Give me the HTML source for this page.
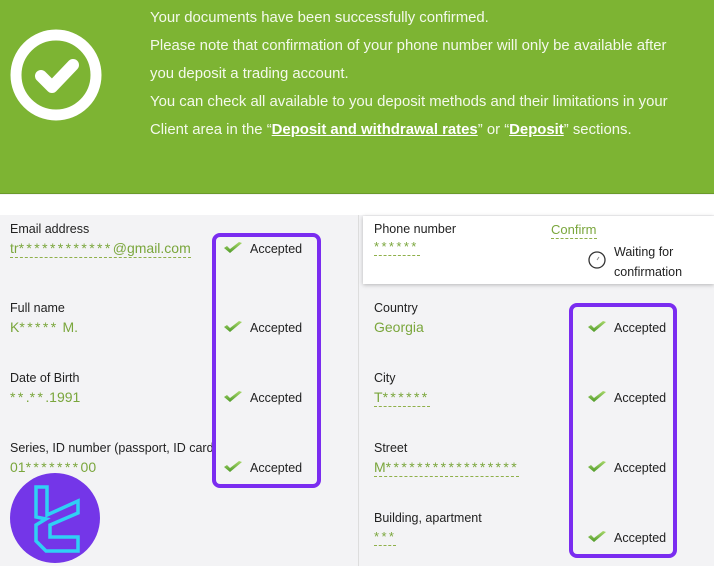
<!DOCTYPE html>
<html><head><style>
*{margin:0;padding:0;box-sizing:border-box}
body{width:714px;height:566px;overflow:hidden;background:#f3f3f5;font-family:"Liberation Sans",sans-serif;position:relative}
.ban{position:absolute;left:0;top:0;width:714px;height:194px;background:#7db433;border-bottom:1px solid #6a9a2a}
.ban p{position:absolute;left:150px;color:#f4f9ec;font-size:14.9px;white-space:nowrap}
.ban b{text-decoration:underline;color:#fff}
.strip{position:absolute;left:0;top:195px;width:714px;height:20px;background:#fff}
.lbl{position:absolute;font-size:12.5px;color:#222;white-space:nowrap}
.val{position:absolute;font-size:14px;color:#7aa63c;white-space:nowrap;border-bottom:1px dashed #8fb04a;line-height:17px}
.val.nb{border-bottom:none}
.s{letter-spacing:2.4px}
.acc{position:absolute;font-size:12.5px;color:#222;white-space:nowrap}
.acc svg{position:absolute;left:-27px;top:-2px}
.pbox{position:absolute;border:4px solid #7a2cf0;border-radius:8px}
</style></head><body>
<div class="ban">
<svg style="position:absolute;left:10px;top:29px" width="92" height="92" viewBox="0 0 92 92"><circle cx="46" cy="46" r="40" fill="none" stroke="#fff" stroke-width="11"/><path d="M31 47 L42 58 L63 36" fill="none" stroke="#fff" stroke-width="12" stroke-linecap="round" stroke-linejoin="round"/></svg>
<p style="top:10px">Your documents have been successfully confirmed.</p>
<p style="top:38px">Please note that confirmation of your phone number will only be available after</p>
<p style="top:66px">you deposit a trading account.</p>
<p style="top:94px">You can check all available to you deposit methods and their limitations in your</p>
<p style="top:122px">Client area in the “<b>Deposit and withdrawal rates</b>” or “<b>Deposit</b>” sections.</p>
</div>
<div class="strip"></div>
<div style="position:absolute;left:358px;top:215px;width:1px;height:351px;background:#ddd"></div>
<div style="position:absolute;left:363px;top:216px;width:351px;height:68px;background:#fff;box-shadow:0 1px 4px rgba(0,0,0,.25)"></div>

<div class="lbl" style="left:10px;top:222px">Email address</div>
<div class="val" style="left:10px;top:240px">tr<span class="s">************</span>@gmail.com</div>
<div class="lbl" style="left:10px;top:301px">Full name</div>
<div class="val nb" style="left:10px;top:319px">K<span class="s">*****</span> M.</div>
<div class="lbl" style="left:10px;top:371px">Date of Birth</div>
<div class="val nb" style="left:10px;top:389px"><span class="s">**</span>.<span class="s">**</span>.1991</div>
<div class="lbl" style="left:10px;top:441px">Series, ID number (passport, ID card</div>
<div class="val nb" style="left:10px;top:459px">01<span class="s">*******</span>00</div>

<div class="lbl" style="left:374px;top:222px">Phone number</div>
<div class="val" style="left:374px;top:238px;font-size:13px;width:46px"><span class="s">******</span></div>
<div class="val" style="left:551px;top:221px;font-size:13px">Confirm</div>
<svg style="position:absolute;left:587px;top:250px" width="20" height="20"><circle cx="10" cy="10" r="8" fill="#fff" stroke="#333" stroke-width="1.3"/><path d="M10 10 L12 7" stroke="#888"/></svg>
<div class="lbl" style="left:614px;top:242px;line-height:20px">Waiting for<br>confirmation</div>
<div class="lbl" style="left:374px;top:301px">Country</div>
<div class="val nb" style="left:374px;top:319px">Georgia</div>
<div class="lbl" style="left:374px;top:371px">City</div>
<div class="val" style="left:374px;top:389px">T<span class="s">******</span></div>
<div class="lbl" style="left:374px;top:441px">Street</div>
<div class="val" style="left:374px;top:459px">M<span class="s">*****************</span></div>
<div class="lbl" style="left:374px;top:511px">Building, apartment</div>
<div class="val" style="left:374px;top:528px;font-size:13px"><span class="s">***</span></div>

<div class="pbox" style="left:212px;top:233px;width:109px;height:255px"></div>
<div class="pbox" style="left:569px;top:303px;width:108px;height:255px"></div>

<svg width="0" height="0" style="position:absolute"><defs><linearGradient id="g" x1="0" y1="0" x2="0" y2="1"><stop offset="0" stop-color="#a8d86a"/><stop offset="1" stop-color="#4f9a2a"/></linearGradient></defs></svg>
<div class="acc" style="left:250px;top:242px"><svg width="20" height="16"><path d="M1 8 L7 13 L19 3 L16 2 L7 9 L4 6Z" fill="url(#g)"/></svg>Accepted</div>
<div class="acc" style="left:250px;top:321px"><svg width="20" height="16"><path d="M1 8 L7 13 L19 3 L16 2 L7 9 L4 6Z" fill="url(#g)"/></svg>Accepted</div>
<div class="acc" style="left:250px;top:391px"><svg width="20" height="16"><path d="M1 8 L7 13 L19 3 L16 2 L7 9 L4 6Z" fill="url(#g)"/></svg>Accepted</div>
<div class="acc" style="left:250px;top:461px"><svg width="20" height="16"><path d="M1 8 L7 13 L19 3 L16 2 L7 9 L4 6Z" fill="url(#g)"/></svg>Accepted</div>
<div class="acc" style="left:614px;top:321px"><svg width="20" height="16"><path d="M1 8 L7 13 L19 3 L16 2 L7 9 L4 6Z" fill="url(#g)"/></svg>Accepted</div>
<div class="acc" style="left:614px;top:391px"><svg width="20" height="16"><path d="M1 8 L7 13 L19 3 L16 2 L7 9 L4 6Z" fill="url(#g)"/></svg>Accepted</div>
<div class="acc" style="left:614px;top:461px"><svg width="20" height="16"><path d="M1 8 L7 13 L19 3 L16 2 L7 9 L4 6Z" fill="url(#g)"/></svg>Accepted</div>
<div class="acc" style="left:614px;top:531px"><svg width="20" height="16"><path d="M1 8 L7 13 L19 3 L16 2 L7 9 L4 6Z" fill="url(#g)"/></svg>Accepted</div>

<svg style="position:absolute;left:10px;top:473px" width="90" height="90" viewBox="0 0 90 90"><circle cx="45" cy="45" r="45" fill="#7436e8"/>
<path d="M26 14 L37 14 L37 42 L68 28 L68 40 L40 52 L40 64 L68 64 L68 78 L36 78 L26 68 L26 52 L36 46 L26 44Z" fill="none" stroke="#2fd0f5" stroke-width="3.5" stroke-linejoin="miter"/>
</svg>
</body></html>
